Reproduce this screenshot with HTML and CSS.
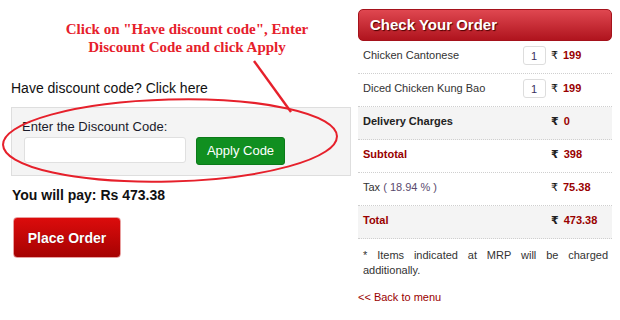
FILE: index.html
```html
<!DOCTYPE html>
<html>
<head>
<meta charset="utf-8">
<link rel="stylesheet" href="styles.css">
</head>
<body>
<div class="page">
  <div class="left">
    <div class="annotation">Click on "Have discount code", Enter<br>Discount Code and click Apply</div>
    <div class="have-code">Have discount code? Click here</div>
    <div class="discount-box">
      <div class="discount-label">Enter the Discount Code:</div>
      <div class="discount-row">
        <input class="code-input" type="text">
        <button class="apply-btn">Apply Code</button>
      </div>
    </div>
    <div class="you-pay">You will pay: Rs 473.38</div>
    <button class="place-btn">Place Order</button>
    <svg class="callout" width="358" height="320" viewBox="0 0 358 320">
      <line x1="254" y1="61" x2="291" y2="112" stroke="#e6202b" stroke-width="2.4"/>
      <ellipse cx="170" cy="140.5" rx="167" ry="41" transform="rotate(-1.5 170 140.5)" fill="none" stroke="#e6202b" stroke-width="2"/>
    </svg>
  </div>
  <div class="right">
    <div class="order-head">Check Your Order</div>
    <div class="row">
      <span class="label">Chicken Cantonese</span>
      <span class="qty">1</span>
      <span class="price"><span class="rs">₹</span>199</span>
    </div>
    <div class="row">
      <span class="label">Diced Chicken Kung Bao</span>
      <span class="qty">1</span>
      <span class="price"><span class="rs">₹</span>199</span>
    </div>
    <div class="row shaded strong">
      <span class="label">Delivery Charges</span>
      <span></span>
      <span class="price"><span class="rs">₹</span>0</span>
    </div>
    <div class="row strong">
      <span class="label red">Subtotal</span>
      <span></span>
      <span class="price"><span class="rs">₹</span>398</span>
    </div>
    <div class="row">
      <span class="label">Tax <span class="pct">( 18.94 % )</span></span>
      <span></span>
      <span class="price"><span class="rs">₹</span>75.38</span>
    </div>
    <div class="row shaded strong">
      <span class="label red">Total</span>
      <span></span>
      <span class="price"><span class="rs">₹</span>473.38</span>
    </div>
    <p class="note">* Items indicated at MRP will be charged additionally.</p>
    <a class="back" href="#">&lt;&lt; Back to menu</a>
  </div>
</div>
</body>
</html>
```
FILE: styles.css
```css
html, body {
  margin: 0;
  padding: 0;
  background: #fff;
}
body {
  font-family: "Liberation Sans", Arial, sans-serif;
  color: #111;
}
.page {
  display: flex;
  width: 620px;
  height: 320px;
}
.left {
  position: relative;
  width: 358px;
  flex: none;
}
.annotation {
  width: 374px;
  padding-top: 20px;
  text-align: center;
  font-family: "Liberation Serif", "Times New Roman", serif;
  font-weight: bold;
  font-size: 15px;
  line-height: 18px;
  color: #e6202b;
}
.have-code {
  margin-top: 23px;
  padding-left: 11px;
  font-size: 14px;
  line-height: 18px;
  color: #111;
}
.discount-box {
  margin: 10px 0 0 11px;
  width: 328px;
  border: 1px solid #dedede;
  background: #f4f4f4;
  padding: 11px 0 10px 10px;
}
.discount-label {
  font-size: 13px;
  line-height: 16px;
  color: #1a1a2a;
}
.discount-row {
  display: flex;
  align-items: flex-start;
  gap: 10px;
  margin-top: 2px;
  padding-left: 2px;
}
.code-input {
  box-sizing: border-box;
  width: 162px;
  height: 26px;
  margin: 0;
  border: 1px solid #e0e0e0;
  border-radius: 3px;
  background: #fff;
}
.apply-btn {
  box-sizing: border-box;
  width: 89px;
  height: 28px;
  margin: 0;
  padding: 0;
  border: 1px solid #0b7a19;
  border-radius: 3px;
  background: #108f20;
  color: #fff;
  font-family: "Liberation Sans", Arial, sans-serif;
  font-size: 13px;
  line-height: 26px;
}
.you-pay {
  margin-top: 10px;
  padding-left: 12px;
  font-size: 14px;
  font-weight: bold;
  line-height: 18px;
  color: #111;
}
.place-btn {
  display: block;
  box-sizing: border-box;
  margin: 13px 0 0 13px;
  width: 108px;
  height: 41px;
  padding: 0;
  border: 1px solid #e9a0a0;
  border-radius: 4px;
  background: linear-gradient(#dc0c0c, #a60202);
  color: #fff;
  font-family: "Liberation Sans", Arial, sans-serif;
  font-size: 14px;
  font-weight: bold;
  text-shadow: 0 0 1px #700;
}
.callout {
  position: absolute;
  left: 0;
  top: 0;
  pointer-events: none;
}
.right {
  width: 254px;
  flex: none;
  padding-top: 9px;
}
.order-head {
  box-sizing: border-box;
  height: 32px;
  padding-left: 11px;
  border: 1px solid #a5121b;
  border-radius: 5px;
  background: linear-gradient(#df4750, #b0141e);
  color: #fff;
  font-size: 15px;
  font-weight: bold;
  line-height: 30px;
  text-shadow: 1px 1px 1px #4a0000;
}
.row {
  display: grid;
  grid-template-columns: 155px 23px 1fr;
  column-gap: 5px;
  align-items: center;
  box-sizing: border-box;
  height: 33px;
  padding: 0 0 4px 5px;
  border-bottom: 1px dotted #cfcfcf;
  font-size: 11px;
  color: #333;
}
.row.shaded {
  background: #f4f4f4;
}
.row.strong .label,
.row.strong .rs {
  font-weight: bold;
  color: #222;
}
.row.strong .label.red,
.label.red {
  color: #990000;
}
.pct {
  color: #5a4a6e;
}
.qty {
  box-sizing: border-box;
  height: 19px;
  padding-left: 7px;
  border: 1px solid #dddddd;
  border-radius: 3px;
  background: #fff;
  line-height: 18px;
  font-size: 11px;
  color: #3a3060;
}
.price {
  font-family: "Liberation Sans", "Noto Sans", "DejaVu Sans", sans-serif;
  font-weight: bold;
  color: #990000;
  font-size: 11px;
}
.rs {
  font-family: "DejaVu Sans", "Noto Sans", sans-serif;
  font-weight: normal;
  color: #111;
  margin-right: 5px;
}
.note {
  margin: 9px 0 0;
  padding: 0 4px 0 5px;
  font-size: 11px;
  line-height: 15px;
  text-align: justify;
  color: #333;
}
.back {
  display: block;
  margin-top: 12px;
  font-size: 11px;
  line-height: 15px;
  color: #990000;
  text-decoration: none;
}
```
